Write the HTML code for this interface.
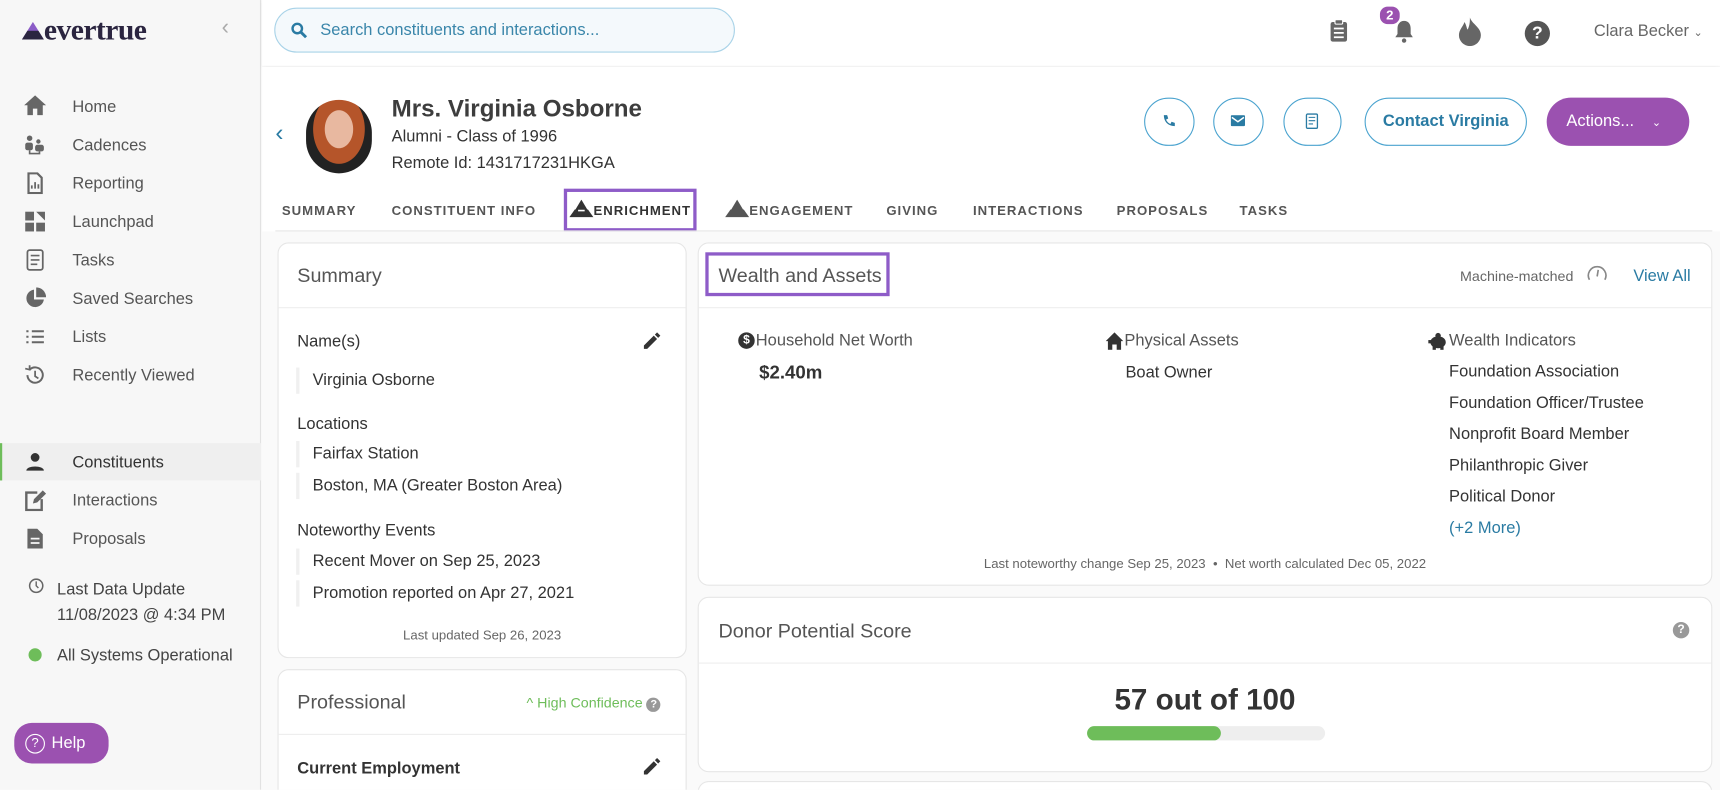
<!DOCTYPE html>
<html><head><meta charset="utf-8"><style>
*{box-sizing:border-box;margin:0;padding:0}
html,body{width:1720px;height:790px;overflow:hidden;background:#fafafa}
#s{position:absolute;left:0;top:0;width:1568px;height:720px;overflow:hidden;transform:scale(1.09694);transform-origin:0 0;font-family:"Liberation Sans",sans-serif;color:#454545}
.a{position:absolute;white-space:nowrap}
.side{position:absolute;left:0;top:0;width:238px;height:720px;background:#f7f7f7;border-right:1px solid #e2e2e2}
.nav{position:absolute;left:66px;font-size:15px;color:#555}
.ic{position:absolute;left:22px;width:20px;height:20px}
.main{position:absolute;left:239px;top:0;width:1329px;height:720px;background:#fafafa}
.card{position:absolute;background:#fff;border:1px solid #e6e6e6;border-radius:10px}
.tab{position:absolute;top:185px;font-size:12px;font-weight:bold;letter-spacing:0.9px;color:#555}
.cb{position:absolute;top:89px;height:44px;border:1.5px solid #4aa3cf;border-radius:22px;background:#fff}
.lbl{font-size:15px;color:#333}
.row{position:absolute;font-size:15px;color:#333;padding-left:12px;border-left:3px solid #f0f0f0}
</style></head><body><div id="s">
<div class="side">
 <svg class="a" style="left:20px;top:20px" width="20" height="16"><path d="M10 0L20 16H0Z" fill="#8b5cc7"/><path d="M0 16L5 8H15L20 16Z" fill="#2b2540"/></svg>
 <div class="a" style="left:40px;top:12px;font-family:'Liberation Serif',serif;font-weight:bold;font-size:27px;color:#2b2540;letter-spacing:-0.5px">evertrue</div>
 <div class="a" style="left:202px;top:14px;font-size:20px;color:#aaa">‹</div>
 <svg class="ic" style="top:86px" viewBox="0 0 20 20"><path d="M10 1L0 10h3v9h5v-6h4v6h5v-9h3z" fill="#666"/></svg><div class="nav" style="top:89px">Home</div>
 <svg class="ic" style="top:122px" viewBox="0 0 20 20"><circle cx="5" cy="4" r="2.5" fill="#666"/><rect x="1" y="8" width="7" height="7" rx="2" fill="#666"/><circle cx="13" cy="7" r="2" fill="#666"/><rect x="10" y="10" width="8" height="6" rx="2" fill="#666"/><path d="M5 15v3h9v-2" stroke="#666" fill="none" stroke-width="1.5"/></svg><div class="nav" style="top:124px">Cadences</div>
 <svg class="ic" style="top:157px" viewBox="0 0 20 20"><path d="M4 1h8l4 4v14H4z" fill="none" stroke="#666" stroke-width="2"/><path d="M7 15v-3M10 15v-6M13 15v-4" stroke="#666" stroke-width="1.6"/></svg><div class="nav" style="top:159px">Reporting</div>
 <svg class="ic" style="top:192px" viewBox="0 0 20 20"><rect x="1" y="1" width="8" height="8" fill="#666"/><path d="M11 1h8v8z" fill="#666"/><rect x="1" y="11" width="8" height="8" fill="#666"/><rect x="11" y="11" width="8" height="8" fill="#666"/></svg><div class="nav" style="top:194px">Launchpad</div>
 <svg class="ic" style="top:227px" viewBox="0 0 20 20"><rect x="3" y="1" width="14" height="18" rx="2" fill="none" stroke="#666" stroke-width="1.6"/><path d="M6 6h8M6 10h8M6 14h6" stroke="#666" stroke-width="1.5"/></svg><div class="nav" style="top:229px">Tasks</div>
 <svg class="ic" style="top:262px" viewBox="0 0 20 20"><path d="M9 2A8 8 0 1 0 18 11H9z" fill="#666"/><path d="M11 0v9h9A9 9 0 0 0 11 0z" fill="#666"/></svg><div class="nav" style="top:264px">Saved Searches</div>
 <svg class="ic" style="top:297px" viewBox="0 0 20 20"><path d="M2 5h2M7 5h11M2 10h2M7 10h11M2 15h2M7 15h11" stroke="#666" stroke-width="1.8"/></svg><div class="nav" style="top:299px">Lists</div>
 <svg class="ic" style="top:332px" viewBox="0 0 20 20"><path d="M3 10a7 7 0 1 0 2-5" fill="none" stroke="#666" stroke-width="1.8"/><path d="M1 4l4 1 0-4" fill="none" stroke="#666" stroke-width="1.6"/><path d="M10 6v5l3 2" fill="none" stroke="#666" stroke-width="1.6"/></svg><div class="nav" style="top:334px">Recently Viewed</div>
 <div class="a" style="left:0;top:404px;width:238px;height:34px;background:#efefef;border-left:2px solid #6ebd5a"></div>
 <svg class="ic" style="top:411px" viewBox="0 0 20 20"><circle cx="10" cy="6" r="4" fill="#333"/><path d="M2 18c0-5 16-5 16 0z" fill="#333"/></svg><div class="nav" style="top:413px;color:#333">Constituents</div>
 <svg class="ic" style="top:446px" viewBox="0 0 20 20"><path d="M12 3H2v16h14V9" fill="none" stroke="#666" stroke-width="2.2"/><path d="M8 13l1-4 8-8 3 3-8 8z" fill="#666"/></svg><div class="nav" style="top:448px">Interactions</div>
 <svg class="ic" style="top:481px" viewBox="0 0 20 20"><path d="M3 1h9l5 5v13H3z" fill="#666"/><path d="M6 10h8M6 14h8" stroke="#f7f7f7" stroke-width="1.6"/></svg><div class="nav" style="top:483px">Proposals</div>
 <svg class="a" style="left:26px;top:527px" width="14" height="14" viewBox="0 0 14 14"><circle cx="7" cy="7" r="6" fill="none" stroke="#666" stroke-width="1.4"/><path d="M7 3v4l2 2" fill="none" stroke="#666" stroke-width="1.3"/></svg>
 <div class="a" style="left:52px;top:526px;font-size:15px;color:#444;line-height:23px">Last Data Update<br>11/08/2023 @ 4:34 PM</div>
 <div class="a" style="left:26px;top:591px;width:12px;height:12px;border-radius:6px;background:#6ebd5a"></div>
 <div class="a" style="left:52px;top:589px;font-size:15px;color:#444">All Systems Operational</div>
 <div class="a" style="left:13px;top:659px;width:86px;height:37px;background:#9b51b0;border-radius:16px;color:#fff;font-size:15px;display:flex;align-items:center;padding-left:10px;gap:6px"><span style="display:inline-block;width:18px;height:18px;border:1.5px solid #fff;border-radius:9px;font-size:12px;text-align:center;line-height:15px">?</span>Help</div>
</div>
<div class="main">
 <div class="a" style="left:0;top:0;width:1329px;height:60px;background:#fff;box-shadow:0 2px 4px rgba(0,0,0,.05)"></div>
 <div class="a" style="left:11px;top:7px;width:420px;height:41px;border:1px solid #a9d3e8;border-radius:21px;background:#f4f9fc"></div>
 <svg class="a" style="left:26px;top:20px" width="15" height="15" viewBox="0 0 15 15"><circle cx="6" cy="6" r="4.3" fill="none" stroke="#2a7ba3" stroke-width="2.2"/><path d="M9 9l5 5" stroke="#2a7ba3" stroke-width="2.6"/></svg>
 <div class="a" style="left:53px;top:19px;font-size:15px;color:#3a86aa">Search constituents and interactions...</div>
 <svg class="a" style="left:973px;top:17px" width="17" height="22" viewBox="0 0 17 22"><rect x="1" y="3" width="15" height="18" rx="2" fill="#666"/><rect x="5" y="1" width="7" height="4" rx="1" fill="#666" stroke="#fff" stroke-width="1"/><path d="M4 9h9M4 13h9M4 17h9" stroke="#fff" stroke-width="1.6"/></svg>
 <svg class="a" style="left:1031px;top:18px" width="20" height="22" viewBox="0 0 20 22"><path d="M10 1c-4 0-6 3-6 7v5l-2 3h16l-2-3V8c0-4-2-7-6-7z" fill="#666"/><circle cx="10" cy="19" r="2" fill="#666"/></svg>
 <div class="a" style="left:1017px;top:4px;width:22px;height:20px;background:#9b51b0;border-radius:9px;color:#fff;font-size:12px;font-weight:bold;text-align:center;line-height:16px;border:2px solid #fff">2</div>
 <svg class="a" style="left:1090px;top:16px" width="22" height="26" viewBox="0 0 22 26"><path d="M11 0C13 6 21 9 21 16a10 10 0 0 1-20 0C1 11 5 8 6 4c2 3 2 6 3 7 2-4 2-8 2-11z" fill="#666"/></svg>
 <div class="a" style="left:1151px;top:19px;width:23px;height:23px;border-radius:12px;background:#555;color:#fff;font-weight:bold;font-size:16px;text-align:center;line-height:23px">?</div>
 <div class="a" style="left:1214px;top:20px;font-size:15px;color:#666">Clara Becker <span style="font-size:10px">⌄</span></div>
 <div class="a" style="left:0;top:61px;width:1329px;height:150px;background:#fff"></div>
 <div class="a" style="left:12px;top:108px;font-size:22px;color:#2a7ba3">‹</div>
 <div class="a" style="left:40px;top:91px;width:60px;height:67px;border-radius:33px;background:radial-gradient(ellipse at 50% 40%,#e8b8a0 0 30%,#b5552a 31% 55%,#222 56%)"></div>
 <div class="a" style="left:118px;top:86px;font-size:22px;font-weight:bold;color:#3d3d3d">Mrs. Virginia Osborne</div>
 <div class="a" style="left:118px;top:116px;font-size:15px;color:#333">Alumni - Class of 1996</div>
 <div class="a" style="left:118px;top:140px;font-size:15px;color:#333">Remote Id: 1431717231HKGA</div>
 <div class="cb" style="left:804px;width:46px"><svg class="a" style="left:15px;top:14px" width="13" height="13" viewBox="0 0 13 13"><path d="M2 1l3 0 1 3-2 1c1 2 2 3 4 4l1-2 3 1v3c-6 0-10-4-10-10z" fill="#2a7ba3"/></svg></div>
 <div class="cb" style="left:867px;width:46px"><svg class="a" style="left:15px;top:15px" width="13" height="11" viewBox="0 0 13 11"><rect width="13" height="10" rx="1" fill="#2a7ba3"/><path d="M1 2l5.5 4L12 2" fill="none" stroke="#fff" stroke-width="1.3"/></svg></div>
 <div class="cb" style="left:931px;width:53px"><svg class="a" style="left:19px;top:13px" width="12" height="15" viewBox="0 0 12 15"><rect x="1" y="1" width="10" height="13" rx="1" fill="none" stroke="#2a7ba3" stroke-width="1.2"/><path d="M3 4h6M3 7h6M3 10h4" stroke="#2a7ba3" stroke-width="1"/></svg></div>
 <div class="cb" style="left:1005px;width:148px;color:#2a7ba3;font-size:15px;font-weight:bold;text-align:center;line-height:41px">Contact Virginia</div>
 <div class="a" style="left:1171px;top:89px;width:130px;height:44px;border-radius:22px;background:#9b51b0;color:#fff;font-size:15px;line-height:44px;padding-left:18px">Actions... <span style="font-size:10px;margin-left:12px">⌄</span></div>
 <div class="tab" style="left:18px">SUMMARY</div>
 <div class="tab" style="left:118px">CONSTITUENT INFO</div>
 <div class="a" style="left:275px;top:172px;width:121px;height:39px;border:3px solid #8e5cc8"></div>
 <svg class="a" style="left:280px;top:182px" width="22" height="16" viewBox="0 0 22 16"><path d="M11 0L17 10H5Z" fill="#333"/><path d="M0 16L5 9H17L22 16Z" fill="#333"/><path d="M8 10h6" stroke="#fff" stroke-width="1.5"/></svg>
 <div class="tab" style="left:302px;color:#333">ENRICHMENT</div>
 <svg class="a" style="left:422px;top:182px" width="22" height="16" viewBox="0 0 22 16"><path d="M11 0L17 10H5Z" fill="#555"/><path d="M0 16L5 9H17L22 16Z" fill="#555"/></svg>
 <div class="tab" style="left:444px">ENGAGEMENT</div>
 <div class="tab" style="left:569px">GIVING</div>
 <div class="tab" style="left:648px">INTERACTIONS</div>
 <div class="tab" style="left:779px">PROPOSALS</div>
 <div class="tab" style="left:891px">TASKS</div>
 <div class="a" style="left:12px;top:210px;width:1310px;height:1px;background:#e6e6e6"></div>
 <!-- summary card -->
 <div class="card" style="left:14px;top:221px;width:373px;height:379px">
  <div class="a" style="left:17px;top:19px;font-size:18px;color:#555">Summary</div>
  <div class="a" style="left:0;top:58px;width:371px;height:1px;background:#eee"></div>
  <div class="a" style="left:17px;top:81px" ><span class="lbl">Name(s)</span></div>
  <svg class="a" style="left:331px;top:80px" width="18" height="18" viewBox="0 0 18 18"><path d="M2 13l9-9 3 3-9 9H2z M12 3l2-2 3 3-2 2z" fill="#333"/></svg>
  <div class="a" style="left:17px;top:156px"><span class="lbl">Locations</span></div>
  <div class="a" style="left:17px;top:253px"><span class="lbl">Noteworthy Events</span></div>
  <div class="a" style="left:0;top:350px;width:371px;text-align:center;font-size:12px;color:#666">Last updated Sep 26, 2023</div>
 </div>
 <div class="row" style="left:31px;top:335px;height:24px;line-height:24px">Virginia Osborne</div>
 <div class="row" style="left:31px;top:402px;height:24px;line-height:24px">Fairfax Station</div>
 <div class="row" style="left:31px;top:431px;height:24px;line-height:24px">Boston, MA (Greater Boston Area)</div>
 <div class="row" style="left:31px;top:500px;height:24px;line-height:24px">Recent Mover on Sep 25, 2023</div>
 <div class="row" style="left:31px;top:529px;height:24px;line-height:24px">Promotion reported on Apr 27, 2021</div>
 <div class="card" style="left:14px;top:610px;width:373px;height:130px">
  <div class="a" style="left:17px;top:19px;font-size:18px;color:#555">Professional</div>
  <div class="a" style="left:226px;top:22px;font-size:13px;color:#6ebd5a">^ High Confidence <span style="display:inline-block;width:13px;height:13px;border-radius:7px;background:#999;color:#fff;font-size:10px;text-align:center;line-height:13px;font-weight:bold">?</span></div>
  <div class="a" style="left:0;top:58px;width:371px;height:1px;background:#eee"></div>
  <div class="a" style="left:17px;top:81px"><span class="lbl" style="font-weight:bold;color:#333">Current Employment</span></div>
  <svg class="a" style="left:331px;top:79px" width="18" height="18" viewBox="0 0 18 18"><path d="M2 13l9-9 3 3-9 9H2z M12 3l2-2 3 3-2 2z" fill="#333"/></svg>
 </div>
 <!-- wealth card -->
 <div class="card" style="left:397px;top:221px;width:925px;height:313px">
  <div class="a" style="left:6px;top:8px;width:168px;height:40px;border:3px solid #8e5cc8"></div>
  <div class="a" style="left:18px;top:19px;font-size:18px;color:#555">Wealth and Assets</div>
  <div class="a" style="left:694px;top:22px;font-size:13px;color:#666">Machine-matched</div>
  <svg class="a" style="left:809px;top:18px" width="20" height="18" viewBox="0 0 20 18"><path d="M3 15A8 8 0 1 1 17 15" fill="none" stroke="#888" stroke-width="1.5"/><path d="M10 12l1-6" stroke="#888" stroke-width="1.5"/></svg>
  <div class="a" style="left:852px;top:21px;font-size:15px;color:#2a7ba3">View All</div>
  <div class="a" style="left:0;top:58px;width:923px;height:1px;background:#eee"></div>
  <div class="a" style="left:36px;top:81px;width:15px;height:15px;border-radius:8px;background:#333;color:#fff;font-size:11px;font-weight:bold;text-align:center;line-height:15px">$</div>
  <div class="a" style="left:52px;top:80px;font-size:15px;color:#555">Household Net Worth</div>
  <div class="a" style="left:55px;top:108px;font-size:17px;font-weight:bold;color:#333">$2.40m</div>
  <svg class="a" style="left:371px;top:81px" width="16" height="16" viewBox="0 0 16 16"><path d="M8 0L0 8h2v8h4v-5h4v5h4V8h2z" fill="#333"/></svg>
  <div class="a" style="left:388px;top:80px;font-size:15px;color:#555">Physical Assets</div>
  <div class="a" style="left:389px;top:109px;font-size:15px;color:#333">Boat Owner</div>
  <svg class="a" style="left:665px;top:81px" width="18" height="16" viewBox="0 0 18 16"><ellipse cx="9" cy="9" rx="7" ry="5.5" fill="#333"/><circle cx="9" cy="3" r="2.5" fill="#333"/><rect x="4" y="12" width="3" height="4" fill="#333"/><rect x="11" y="12" width="3" height="4" fill="#333"/><rect x="0" y="7" width="3" height="3" fill="#333"/></svg>
  <div class="a" style="left:684px;top:80px;font-size:15px;color:#555;line-height:18px">Wealth Indicators</div>
  <div class="a" style="left:684px;top:103px;font-size:15px;color:#333;line-height:28.5px">Foundation Association<br>Foundation Officer/Trustee<br>Nonprofit Board Member<br>Philanthropic Giver<br>Political Donor<br><span style="color:#2a7ba3">(+2 More)</span></div>
  <div class="a" style="left:0;top:285px;width:923px;text-align:center;font-size:12px;color:#666">Last noteworthy change Sep 25, 2023 &nbsp;•&nbsp; Net worth calculated Dec 05, 2022</div>
 </div>
 <!-- donor potential -->
 <div class="card" style="left:397px;top:544px;width:925px;height:160px">
  <div class="a" style="left:18px;top:20px;font-size:18px;color:#555">Donor Potential Score</div>
  <div class="a" style="left:888px;top:22px;width:15px;height:15px;border-radius:8px;background:#999;color:#fff;font-size:11px;font-weight:bold;text-align:center;line-height:15px">?</div>
  <div class="a" style="left:0;top:59px;width:923px;height:1px;background:#eee"></div>
  <div class="a" style="left:0;top:78px;width:923px;text-align:center;font-size:27px;font-weight:bold;color:#333">57 out of 100</div>
  <div class="a" style="left:354px;top:117px;width:217px;height:13px;border-radius:7px;background:#eee"><div style="width:122px;height:13px;border-radius:7px;background:#6ebd5a"></div></div>
 </div>
 <div class="a" style="left:397px;top:712px;width:925px;height:10px;border:1px solid #e6e6e6;border-radius:10px 10px 0 0;background:#fff"></div>
</div>
</div></body></html>
